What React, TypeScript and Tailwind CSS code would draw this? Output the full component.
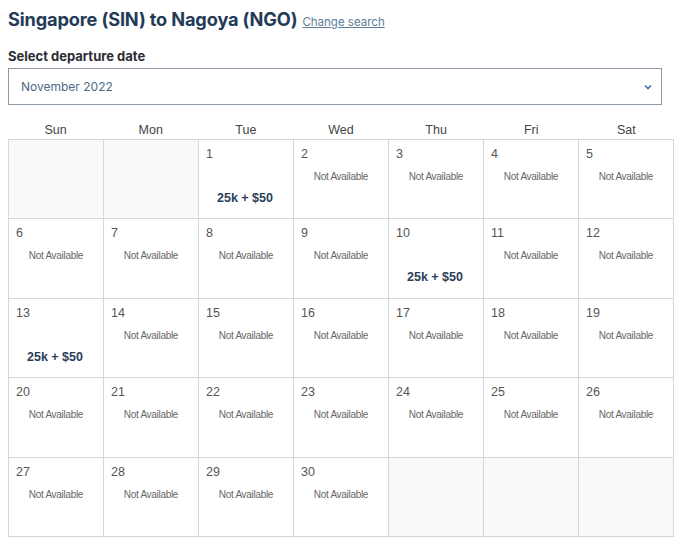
const DAYS = ["Sun", "Mon", "Tue", "Wed", "Thu", "Fri", "Sat"];

type Cell = { day?: number; price?: string };

const AVAILABLE: Record<number, string> = { 1: "25k + $50", 10: "25k + $50", 13: "25k + $50" };

function buildCells(): Cell[] {
  const cells: Cell[] = [{}, {}];
  for (let d = 1; d <= 30; d++) cells.push({ day: d, price: AVAILABLE[d] });
  while (cells.length < 35) cells.push({});
  return cells;
}

export default function App() {
  const cells = buildCells();

  return (
    <div className="w-[696px] h-[549px] bg-white overflow-hidden pl-[8px]">
      {/* heading */}
      <div className="flex items-baseline gap-[5px] pt-[5px] font-[family-name:Inter,sans-serif]">
        <h1 className="text-[18.2px] font-bold text-[#233b57] tracking-[-0.15px] leading-[28px]">
          Singapore (SIN) to Nagoya (NGO)
        </h1>
        <a className="text-[11.5px] text-[#5f7d9a] underline" href="#">
          Change search
        </a>
      </div>

      <div className="mt-[14px] text-[13px] font-bold text-[#2b2f35] font-[family-name:Inter,sans-serif] leading-[18px]">
        Select departure date
      </div>

      {/* month select */}
      <div className="mt-[3px] w-[654px] h-[37px] border border-[#8c99a6] flex items-center justify-between pl-[12px] pr-[8px]">
        <span className="text-[12px] text-[#4f6a86] font-[family-name:Inter,sans-serif]">November 2022</span>
        <svg width="10" height="10" viewBox="0 0 10 10" fill="none">
          <path d="M2 3.5 L5 6.5 L8 3.5" stroke="#3d6ea8" strokeWidth="1.6" />
        </svg>
      </div>

      {/* weekday header */}
      <div className="grid grid-cols-7 w-[666px] mt-[14px] h-[20px] font-[family-name:Liberation_Sans,Arial,sans-serif] text-[12.5px] text-[#444]">
        {DAYS.map((d) => (
          <div key={d} className="text-center leading-[22px]">
            {d}
          </div>
        ))}
      </div>

      {/* calendar grid */}
      <div className="grid grid-cols-7 w-[666px] border-l border-t border-[#d6d6d6] font-[family-name:Liberation_Sans,Arial,sans-serif]">
        {cells.map((c, i) => (
          <div
            key={i}
            className={
              "h-[79.4px] border-r border-b border-[#d6d6d6] flex flex-col " +
              (c.day ? "bg-white" : "bg-[#f9f9f9]")
            }
          >
            {c.day && (
              <>
                <div className="pl-[7px] pt-[6px] text-[12.5px] text-[#555] leading-[16px]">{c.day}</div>
                {c.price ? (
                  <div className="mt-[28px] pr-[2px] text-center text-[12.5px] font-bold text-[#2a4058] leading-[16px]">
                    {c.price}
                  </div>
                ) : (
                  <div className="mt-[8px] text-center text-[10px] text-[#666] leading-[14px] tracking-[-0.3px]">
                    Not Available
                  </div>
                )}
              </>
            )}
          </div>
        ))}
      </div>
    </div>
  );
}
